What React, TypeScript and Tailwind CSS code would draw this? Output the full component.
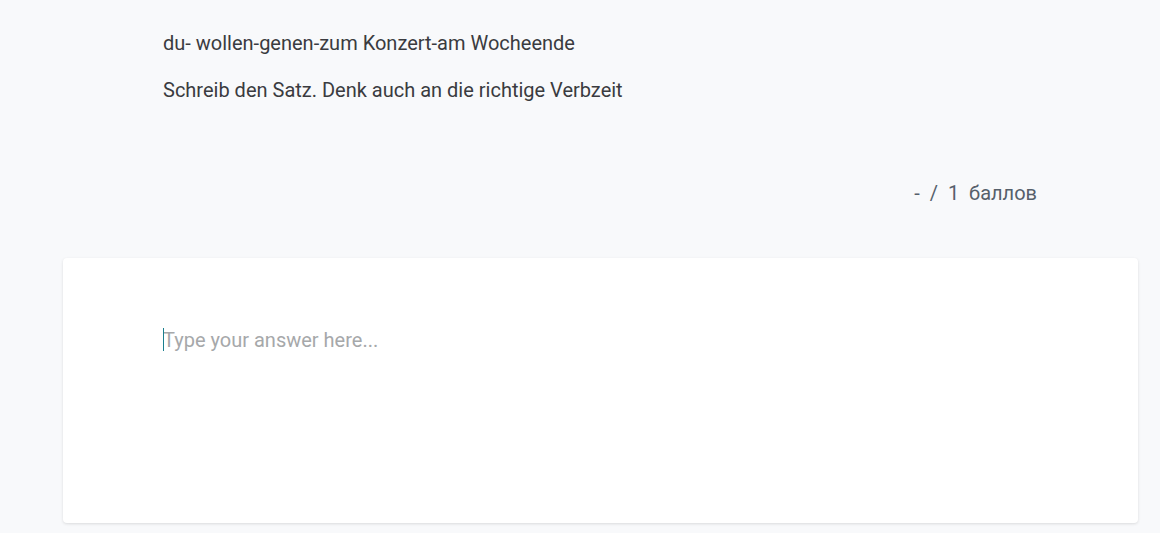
export default function App() {
  return (
    <div
      className="min-h-[533px] w-full bg-[#f8f9fb] text-[#3a3b40]"
      style={{ fontFamily: "Roboto, 'Liberation Sans', sans-serif" }}
    >
      <div className="pl-[163px] pt-[30px] text-[20px] leading-[26px]">
        <p>du- wollen-genen-zum Konzert-am Wocheende</p>
        <p className="mt-[21px]">Schreib den Satz. Denk auch an die richtige Verbzeit</p>
      </div>

      <div className="flex justify-end pr-[123px] pt-[77px] text-[20px] leading-[26px] text-[#56606b]">
        <span className="whitespace-pre">-  /  1  баллов</span>
      </div>

      <div className="ml-[63px] mr-[22px] mt-[52px] h-[265px] rounded-[4px] bg-white pl-[100px] pt-[70px] shadow-[0_1px_3px_rgba(0,0,0,0.12)]">
        <div className="relative h-[150px] w-[900px]">
          <textarea
            placeholder="Type your answer here..."
            className="block h-full w-full resize-none bg-transparent text-[20px] leading-[24px] text-[#3a3b40] outline-none placeholder:text-[#a6a8aa]"
          />
          <span className="absolute left-0 top-0 h-[23px] w-px bg-[#1a7f8e]" />
        </div>
      </div>
    </div>
  );
}
